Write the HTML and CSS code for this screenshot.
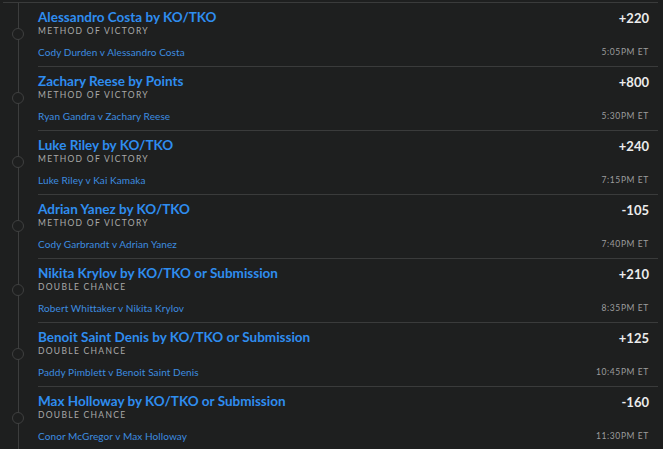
FILE: index.html
```html
<!DOCTYPE html>
<html>
<head>
<meta charset="utf-8">
<link rel="stylesheet" href="styles.css">
</head>
<body>
<div class="panel">
  <ul class="list">
    <li class="row">
      <div class="rail"><span class="dot"></span></div>
      <div class="body">
        <div class="top">
          <div class="pick">
            <div class="title">Alessandro Costa by KO/TKO</div>
            <div class="market">METHOD OF VICTORY</div>
          </div>
          <div class="odds">+220</div>
        </div>
        <div class="bottom">
          <span class="match">Cody Durden v Alessandro Costa</span>
          <span class="time">5:05PM ET</span>
        </div>
      </div>
    </li>
    <li class="row">
      <div class="rail"><span class="dot"></span></div>
      <div class="body">
        <div class="top">
          <div class="pick">
            <div class="title">Zachary Reese by Points</div>
            <div class="market">METHOD OF VICTORY</div>
          </div>
          <div class="odds">+800</div>
        </div>
        <div class="bottom">
          <span class="match">Ryan Gandra v Zachary Reese</span>
          <span class="time">5:30PM ET</span>
        </div>
      </div>
    </li>
    <li class="row">
      <div class="rail"><span class="dot"></span></div>
      <div class="body">
        <div class="top">
          <div class="pick">
            <div class="title">Luke Riley by KO/TKO</div>
            <div class="market">METHOD OF VICTORY</div>
          </div>
          <div class="odds">+240</div>
        </div>
        <div class="bottom">
          <span class="match">Luke Riley v Kai Kamaka</span>
          <span class="time">7:15PM ET</span>
        </div>
      </div>
    </li>
    <li class="row">
      <div class="rail"><span class="dot"></span></div>
      <div class="body">
        <div class="top">
          <div class="pick">
            <div class="title">Adrian Yanez by KO/TKO</div>
            <div class="market">METHOD OF VICTORY</div>
          </div>
          <div class="odds">-105</div>
        </div>
        <div class="bottom">
          <span class="match">Cody Garbrandt v Adrian Yanez</span>
          <span class="time">7:40PM ET</span>
        </div>
      </div>
    </li>
    <li class="row">
      <div class="rail"><span class="dot"></span></div>
      <div class="body">
        <div class="top">
          <div class="pick">
            <div class="title">Nikita Krylov by KO/TKO or Submission</div>
            <div class="market">DOUBLE CHANCE</div>
          </div>
          <div class="odds">+210</div>
        </div>
        <div class="bottom">
          <span class="match">Robert Whittaker v Nikita Krylov</span>
          <span class="time">8:35PM ET</span>
        </div>
      </div>
    </li>
    <li class="row">
      <div class="rail"><span class="dot"></span></div>
      <div class="body">
        <div class="top">
          <div class="pick">
            <div class="title">Benoit Saint Denis by KO/TKO or Submission</div>
            <div class="market">DOUBLE CHANCE</div>
          </div>
          <div class="odds">+125</div>
        </div>
        <div class="bottom">
          <span class="match">Paddy Pimblett v Benoit Saint Denis</span>
          <span class="time">10:45PM ET</span>
        </div>
      </div>
    </li>
    <li class="row">
      <div class="rail"><span class="dot"></span></div>
      <div class="body">
        <div class="top">
          <div class="pick">
            <div class="title">Max Holloway by KO/TKO or Submission</div>
            <div class="market">DOUBLE CHANCE</div>
          </div>
          <div class="odds">-160</div>
        </div>
        <div class="bottom">
          <span class="match">Conor McGregor v Max Holloway</span>
          <span class="time">11:30PM ET</span>
        </div>
      </div>
    </li>
  </ul>
</div>
</body>
</html>
```

FILE: styles.css
```css
html, body {
  margin: 0;
  padding: 0;
  background: #1b1c1c;
  height: 100%;
  overflow: hidden;
}
body {
  font-family: Lato, "Open Sans", sans-serif;
}
.panel {
  width: 660px;
  height: 100%;
  padding-left: 3px;
  box-sizing: border-box;
  background: #1e1f1f;
  padding-top: 2px;
}
.list {
  list-style: none;
  margin: 0;
  padding: 0;
  border-top: 1px solid #3a3b3b;
  position: relative;
  width: 655px;
}
.list::before {
  content: "";
  position: absolute;
  left: 15px;
  top: 0;
  height: 460px;
  width: 1px;
  background: #3c3d3d;
}
.row {
  display: flex;
  height: 64px;
}
.rail {
  width: 35px;
  flex: none;
  display: flex;
  justify-content: flex-start;
  padding-left: 9px;
  box-sizing: border-box;
}
.dot {
  position: relative;
  width: 10px;
  height: 10px;
  margin-top: 25px;
  border: 1.5px solid #3f4040;
  border-radius: 50%;
  background: #1e1f1f;
}
.body {
  flex: 1;
  display: flex;
  flex-direction: column;
  justify-content: space-between;
  border-bottom: 1px solid #3a3b3b;
  padding: 6px 9px 8px 0;
}
.top {
  display: flex;
  justify-content: space-between;
  align-items: flex-start;
}
.title {
  color: #2f8def;
  font-weight: 700;
  font-size: 13.5px;
  line-height: 16px;
}
.market {
  color: #a9a9a9;
  font-size: 8.5px;
  letter-spacing: 1.3px;
  line-height: 12px;
}
.odds {
  color: #ececec;
  font-weight: 700;
  font-size: 13px;
  line-height: 18px;
}
.bottom {
  display: flex;
  justify-content: space-between;
  align-items: center;
  line-height: 12px;
}
.match {
  color: #3d8de0;
  font-size: 10px;
  letter-spacing: 0.1px;
}
.time {
  color: #9d9d9d;
  font-size: 8.5px;
  letter-spacing: 0.6px;
}
```
